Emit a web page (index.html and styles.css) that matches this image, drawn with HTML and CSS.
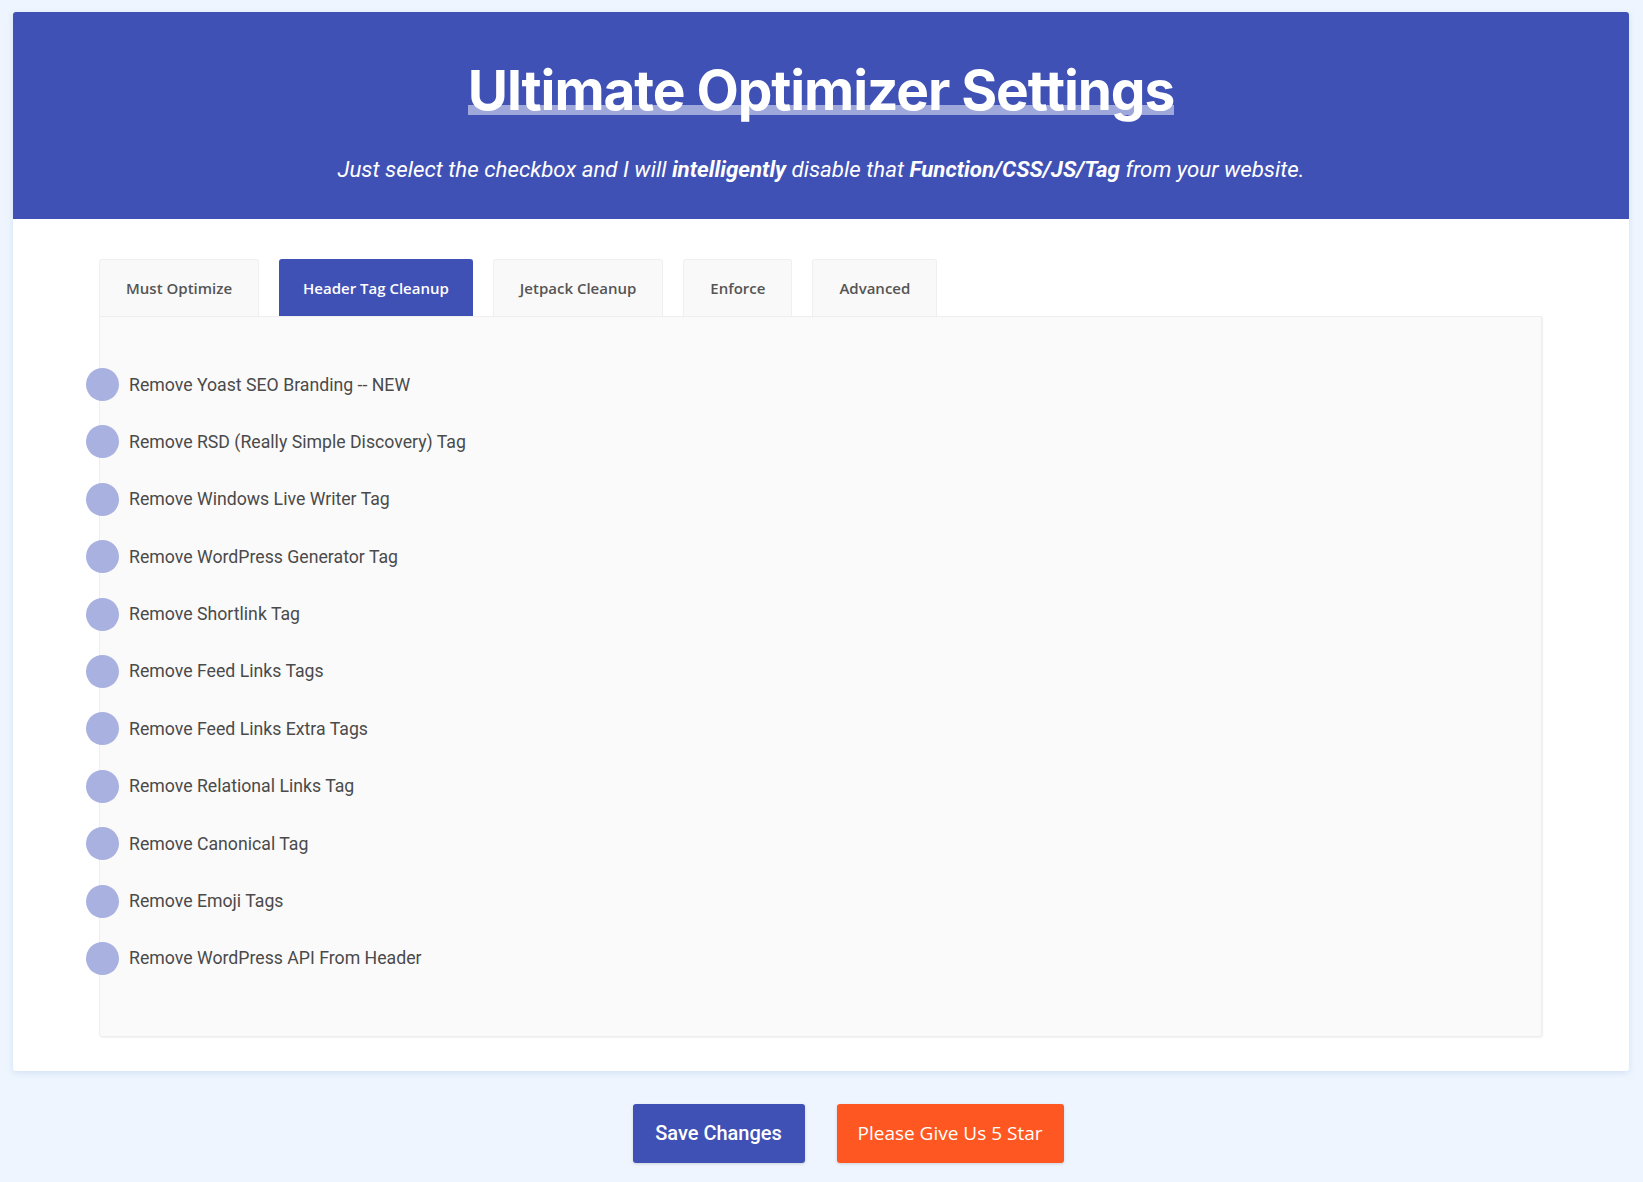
FILE: index.html
```html
<!DOCTYPE html>
<html lang="en">
<head>
    <meta charset="UTF-8">
    <meta name="viewport" content="width=device-width, initial-scale=1.0">
    <title>Ultimate Optimizer Settings</title>
    <link rel="stylesheet" href="styles.css">
</head>
<body>
    <div class="card">
        <div class="header">
            <h1><span class="mark">Ultimate Optimizer Settings</span></h1>
            <p class="lead">Just select the checkbox and I will <b>intelligently</b> disable that <b>Function/CSS/JS/Tag</b> from your website.</p>
        </div>

        <div class="content">
            <div class="tabs">
                <div class="tab">Must Optimize</div>
                <div class="tab active">Header Tag Cleanup</div>
                <div class="tab">Jetpack Cleanup</div>
                <div class="tab">Enforce</div>
                <div class="tab">Advanced</div>
            </div>

            <div class="panel">
                <label class="option"><span class="dot"></span>Remove Yoast SEO Branding -- NEW</label>
                <label class="option"><span class="dot"></span>Remove RSD (Really Simple Discovery) Tag</label>
                <label class="option"><span class="dot"></span>Remove Windows Live Writer Tag</label>
                <label class="option"><span class="dot"></span>Remove WordPress Generator Tag</label>
                <label class="option"><span class="dot"></span>Remove Shortlink Tag</label>
                <label class="option"><span class="dot"></span>Remove Feed Links Tags</label>
                <label class="option"><span class="dot"></span>Remove Feed Links Extra Tags</label>
                <label class="option"><span class="dot"></span>Remove Relational Links Tag</label>
                <label class="option"><span class="dot"></span>Remove Canonical Tag</label>
                <label class="option"><span class="dot"></span>Remove Emoji Tags</label>
                <label class="option"><span class="dot"></span>Remove WordPress API From Header</label>
            </div>
        </div>
    </div>

    <div class="actions">
        <button class="btn save">Save Changes</button>
        <button class="btn star">Please Give Us 5 Star</button>
    </div>
</body>
</html>
```

FILE: styles.css
```css
body {
    margin: 0;
    padding: 12px 14px 0 13px;
    background-color: #eef5fe;
    font-family: Roboto, "Liberation Sans", sans-serif;
}
.card {
    background: #ffffff;
    border-radius: 3px;
    box-shadow: 0 2px 6px rgba(160, 190, 230, 0.35);
    overflow: hidden;
}
.header {
    background-color: #3f51b5;
    height: 207px;
    box-sizing: border-box;
    padding-top: 48px;
    text-align: center;
    color: #ffffff;
}
h1 {
    margin: 0;
    font-family: Inter, "Open Sans", sans-serif;
    font-size: 55px;
    font-weight: 700;
    letter-spacing: -1.1px;
    line-height: 60px;
}
.mark {
    background: linear-gradient(to bottom, transparent 72%, #9fa8da 72%, #9fa8da 88%, transparent 88%);
}
.lead {
    margin: 36px 0 0;
    font-size: 22.3px;
    font-style: italic;
    line-height: 26px;
}
.lead b {
    font-weight: 700;
}
.content {
    padding: 40px 87px 34px 86px;
}
.tabs {
    display: flex;
    gap: 20px;
}
.tab {
    height: 57px;
    line-height: 57px;
    padding: 0 26px;
    background: #f9f9f9;
    border: 1px solid #efefef;
    border-bottom: none;
    border-radius: 3px 3px 0 0;
    box-sizing: border-box;
    font-family: "Open Sans", sans-serif;
    font-size: 15px;
    font-weight: 600;
    color: #555555;
}
.tab.active {
    padding: 0 23px;
    background: #3f51b5;
    border-color: #3f51b5;
    color: #ffffff;
}
.panel {
    background: #fafafa;
    border: 1px solid #eeeeee;
    border-radius: 0 0 3px 3px;
    box-shadow: 1px 1px 2px rgba(0, 0, 0, 0.06);
    padding: 51px 0 61px;
    display: flex;
    flex-direction: column;
    gap: 24.4px;
}
.option {
    display: flex;
    align-items: center;
    gap: 10px;
    height: 33px;
    margin-left: -14px;
    font-size: 17.7px;
    color: #4a4a4a;
}
.dot {
    width: 33px;
    height: 33px;
    border-radius: 50%;
    background: #a9b1e1;
    flex: none;
}
.actions {
    display: flex;
    justify-content: center;
    gap: 32px;
    padding: 33px 0 19px 54px;
}
.btn {
    height: 59px;
    border: none;
    border-radius: 3px;
    color: #ffffff;
    box-shadow: 0 1px 3px rgba(0, 0, 0, 0.15);
    cursor: pointer;
}
.save {
    width: 172px;
    background: #3f51b5;
    font-family: Roboto, sans-serif;
    font-size: 20px;
    font-weight: 500;
}
.star {
    width: 227px;
    background: #ff5722;
    font-family: "Open Sans", sans-serif;
    font-size: 19px;
}
```
